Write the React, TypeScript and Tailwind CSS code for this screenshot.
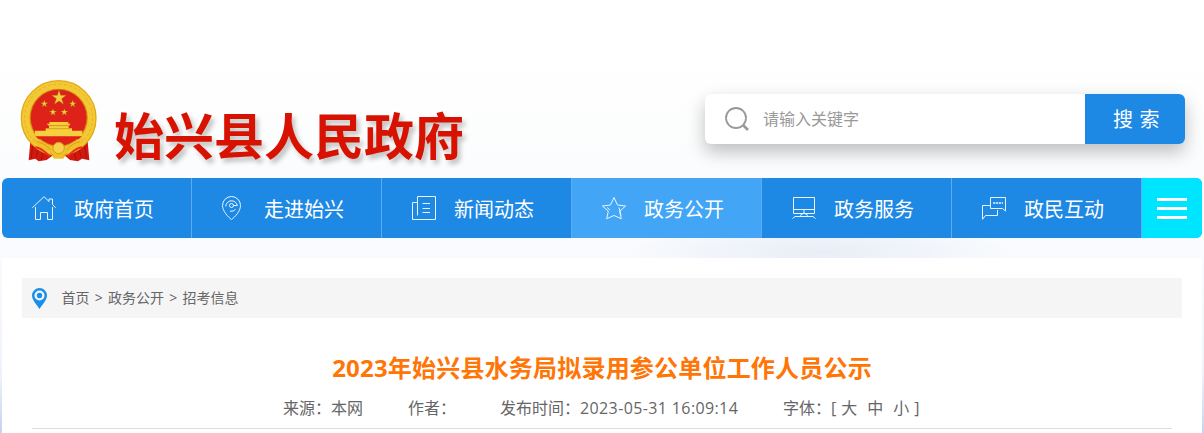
import React from 'react';

const Emblem: React.FC = () => (
  <svg width="77" height="82" viewBox="30 30 231 246" className="shrink-0">
    <path d="M62 203L92 190H205L232 203L238 271L216 266L204 274L180 270L166 258H126L110 270L86 274L76 266L56 271Z" fill="#d3180f" />
    <path d="M68 225L64 266M84 240L78 262M98 250L94 270M224 225L229 266M208 240L214 262M194 250L198 270" stroke="#a5120b" strokeWidth="3" fill="none" />
    <circle cx="146" cy="144" r="99" fill="#eebc22" stroke="#e3aa18" strokeWidth="30" />
    <circle cx="146" cy="144" r="99" fill="none" stroke="#f2c935" strokeWidth="22" />
    <circle cx="146" cy="144" r="102" fill="none" stroke="#e6b325" strokeWidth="3" strokeDasharray="9 7" />
    <circle cx="146" cy="143" r="85" fill="#df2219" stroke="#c98b10" strokeWidth="2" />
    <g fill="#f3cf3c" stroke="#9c5b0c" strokeWidth="1">
      <path d="M147 60L152 76L169 76L155 86L161 103L147 93L133 103L139 86L125 76L142 76Z" />
      <path d="M103 90L106 98L114 98L107 103L110 111L103 106L96 111L99 103L92 98L100 98Z" />
      <path d="M188 90L191 98L199 98L192 103L195 111L188 106L181 111L184 103L177 98L185 98Z" />
      <path d="M129 116L132 123L140 123L133 128L136 136L129 131L122 136L125 128L118 123L126 123Z" />
      <path d="M163 116L166 123L174 123L167 128L170 136L163 131L156 136L159 128L152 123L160 123Z" />
    </g>
    <g fill="#f5cf3c">
      <path d="M118 156H175V161H182L177 167H116L110 161H118Z" />
      <path d="M117 168H176V175H186V182H217V195L207 203H85L75 195V182H107V175H117Z" />
    </g>
    <path d="M110 176H183M115 167H178" stroke="#cf8b14" strokeWidth="2" />
    <path d="M76 199H216L206 207H86Z" fill="#df2219" />
    <path d="M66 203C95 208 110 222 124 231H169C183 220 198 208 226 203L214 224C200 236 184 232 173 246L160 266H132L119 246C108 232 92 236 78 224Z" fill="#f0c02b" />
    <path d="M110 208H184L168 224L146 217L125 224Z" fill="#df2219" />
    <circle cx="146" cy="234" r="17" fill="#f5d249" stroke="#d99d1c" strokeWidth="3" />
    <path d="M82 216C102 218 112 230 122 240M210 216C190 218 180 230 170 240M122 249L132 259M170 249L160 259" fill="none" stroke="#cf8b14" strokeWidth="2" />
    <path d="M76 232C96 234 107 249 119 258M216 232C196 234 185 249 173 258" fill="none" stroke="#ea3021" strokeWidth="6" />
  </svg>
);

const navItems = [
  {
    label: '政府首页',
    active: false,
    icon: (
      <>
        <path d="M.3 11.8L12 .7L17 5.5V3H20.5V8.5L23.7 11.8" />
        <path d="M3.5 11V23.5H8.5V16.5H15.5V23.5H20.5V11" />
      </>
    )
  },
  {
    label: '走进始兴',
    active: false,
    icon: (
      <>
        <path d="M9.5 .5A9 9 0 0 1 18.5 9.5C18.5 15 13 21 9.5 23.5C6 21 .5 15 .5 9.5A9 9 0 0 1 9.5 .5Z" />
        <circle cx="9.5" cy="9.5" r="2" />
        <path d="M3.8 10.5A5.8 5.8 0 0 1 15.3 9.5H11.5M8 15.2A5.8 5.8 0 0 0 13.5 13.5" />
      </>
    )
  },
  {
    label: '新闻动态',
    active: false,
    icon: (
      <>
        <path d="M5.5 19.5V.5H23.5V23.5H.5V6.5H5.5" />
        <path d="M10.5 7.5H18M10.5 12.5H18M10.5 16.5H18" />
      </>
    )
  },
  {
    label: '政务公开',
    active: true,
    icon: (
      <>
        <path d="M12 1.5L15.5 9L23.5 10L17.7 15.3L19.3 22.7L12 19.5L4.7 22.7L6.3 15.3L.5 10L8.5 9Z" />
        <path d="M5 11.5L8 14M17 11.5L19 19.5" />
      </>
    )
  },
  {
    label: '政务服务',
    active: false,
    icon: (
      <>
        <path d="M1.5 1.5H22.5V17.5H1.5ZM1.5 13.5H22.5" />
        <path d="M12 14V18M8 19.5L12 17L16 19.5M.5 22.5L3 20.5H21L23.5 22.5" />
      </>
    )
  },
  {
    label: '政民互动',
    active: false,
    icon: (
      <>
        <path d="M8.5 12.5V1.5H23.5V15L20.5 12.5H8.5" />
        <path d="M8.5 9.5H.5V23.3L3.5 19.5H15.5V14" />
        <path d="M11 7H21" strokeWidth="1.5" strokeDasharray="2.2 .7" />
      </>
    )
  }
];

const Header: React.FC = () => (
  <header className="flex h-[178px] shrink-0 items-start pl-5 pr-[19px]">
    <div className="flex pt-20">
      <Emblem />
      <h1 className="ml-[17px] mt-[26px] whitespace-nowrap text-[50px] font-bold leading-[60px] text-[#d81200] [-webkit-text-stroke:5px_white] [paint-order:stroke_fill] [text-shadow:3px_4px_5px_rgba(0,0,0,0.25)]">
        始兴县人民政府
      </h1>
    </div>
    <div className="ml-auto mt-[94px] flex h-[50px] w-[480px] overflow-hidden rounded-md bg-white shadow-[0_8px_18px_rgba(0,0,0,0.25)]">
      <div className="flex flex-1 items-center pl-5">
        <svg width="24" height="24" viewBox="0 0 24 24" fill="none" stroke="#999" className="shrink-0">
          <circle cx="11" cy="11" r="10" strokeWidth="1.8" />
          <path d="M18 18L23 23" strokeWidth="2.6" />
        </svg>
        <span className="ml-3.5 text-base text-[#999]">请输入关键字</span>
      </div>
      <button className="w-[100px] bg-[#1e88e5] pl-[3px] pt-0.5 text-xl tracking-[0.6px] text-white">搜 索</button>
    </div>
  </header>
);

const Nav: React.FC = () => (
  <nav className="mx-0.5 flex h-[60px] shrink-0 overflow-hidden rounded-md bg-[#1e88e5]">
    {navItems.map((item) => (
      <a
        key={item.label}
        className={`flex w-[190px] items-center border-r border-[#5fabf2] pl-[30px] text-xl text-white ${item.active ? 'bg-[#42a5f5]' : ''}`}
      >
        <svg width="24" height="24" viewBox="0 0 24 24" fill="none" stroke="#e9f5ff" strokeWidth="1" className="shrink-0">
          {item.icon}
        </svg>
        <span className="ml-[18px] whitespace-nowrap pt-[3px]">{item.label}</span>
      </a>
    ))}
    <div className="flex flex-1 flex-col items-center justify-center gap-1.5 bg-[#00e5ff]">
      <span className="h-[3px] w-[30px] bg-white" />
      <span className="h-[3px] w-[30px] bg-white" />
      <span className="h-[3px] w-[30px] bg-white" />
    </div>
  </nav>
);

const Breadcrumb: React.FC = () => (
  <div className="mx-5 flex h-10 items-center bg-[#f5f5f5] pl-2.5 text-sm text-[#666]">
    <svg width="15" height="21" viewBox="0 0 15 21" className="shrink-0">
      <path d="M7.5 0A7.5 7.5 0 0 1 15 7.5C15 12 10 17 7.5 21C5 17 0 12 0 7.5A7.5 7.5 0 0 1 7.5 0Z" fill="#1890ea" />
      <circle cx="7.5" cy="7.5" r="5" fill="#f5f5f5" />
      <circle cx="7.5" cy="7.5" r="2.7" fill="#1890ea" />
    </svg>
    <div className="ml-[14.5px] flex">
      <span>首页</span>
      <span className="w-[18.5px] text-center">&gt;</span>
      <span>政务公开</span>
      <span className="w-[18.5px] text-center">&gt;</span>
      <span>招考信息</span>
    </div>
  </div>
);

const Article: React.FC = () => (
  <main className="mx-0.5 mt-5 flex-1 bg-white pt-5">
    <Breadcrumb />
    <h2 className="mt-8 text-center text-2xl font-bold leading-9 tracking-[0.2px] text-[#ff7506]">
      2023年始兴县水务局拟录用参公单位工作人员公示
    </h2>
    <div className="mx-[30px] flex h-[43px] whitespace-nowrap border-b border-[#ddd] pl-[251px] pt-2.5 text-base leading-6 text-[#666]">
      <span className="w-[125px]">来源：本网</span>
      <span className="w-[92px]">作者：</span>
      <span className="w-[283px]">
        发布时间：<span className="tracking-[0.38px]">2023-05-31 16:09:14</span>
      </span>
      <span>字体：</span>
      <span className="flex gap-[5px]">
        <span>[</span>
        <span className="mr-[5px]">大</span>
        <span className="mr-[5px]">中</span>
        <span>小</span>
        <span>]</span>
      </span>
    </div>
  </main>
);

export default function App() {
  return (
    <div className="flex h-[433px] w-[1204px] flex-col overflow-hidden bg-[radial-gradient(ellipse_190px_34px_at_820px_252px,#e8eef7,transparent),linear-gradient(to_bottom,#fff_50px,#fbfcfd_180px,#f8fafd_260px,#eef3fb_375px,#c5d2f0_433px)] font-['Open_Sans','Noto_Sans_CJK_SC',sans-serif]">
      <Header />
      <Nav />
      <Article />
    </div>
  );
}
